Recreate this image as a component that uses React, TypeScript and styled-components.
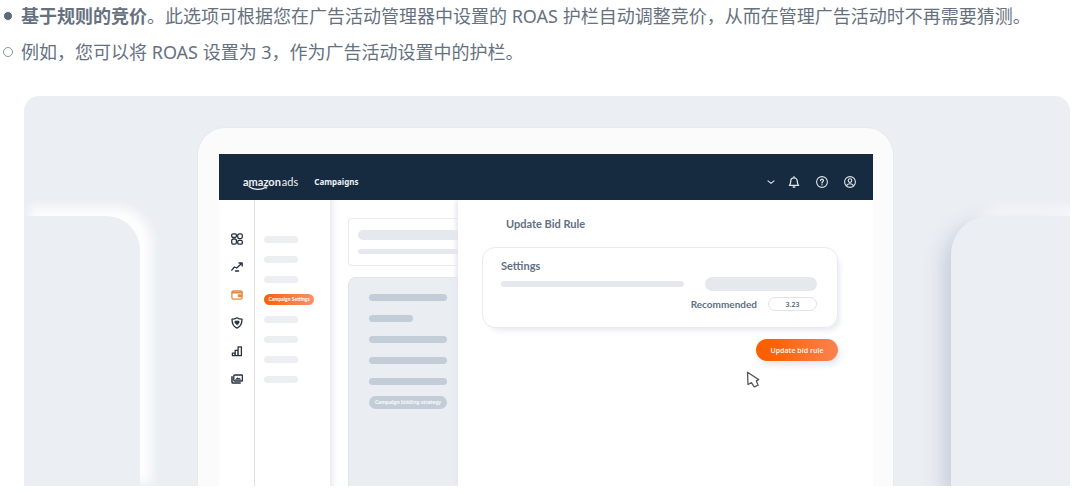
import React from "react";
import styled, { createGlobalStyle, css } from "styled-components";

const GlobalStyle = createGlobalStyle`
  * { box-sizing: border-box; }
  body {
    margin: 0;
    background: #fff;
    font-family: "Noto Sans", "Noto Sans CJK SC", sans-serif;
  }
  button, input { font-family: inherit; }
`;

const Page = styled.main`
  display: flex;
  flex-direction: column;
  min-height: 100vh;
  padding-bottom: 7px;
`;

const Notes = styled.ul`
  display: flex;
  flex-direction: column;
  gap: 4px;
  margin: 0 0 28px;
  padding: 0;
  list-style: none;
  color: #667180;
  font-size: 18px;
  line-height: 32px;
`;

const Note = styled.li<{ $hollow?: boolean }>`
  display: flex;
  align-items: center;
  gap: 8px;
  padding-left: 3px;

  &::before {
    content: "";
    flex: none;
    width: 8px;
    height: 8px;
    border: 1px solid ${(p) => (p.$hollow ? "#8a939f" : "#fff")};
    border-radius: 50%;
    background: ${(p) => (p.$hollow ? "transparent" : "#5d6877")};
  }
`;

const Stage = styled.section`
  flex: 1;
  display: grid;
  grid-template-columns: 116fr 697fr 119fr;
  column-gap: 57px;
  margin: 0 10px 0 24px;
  padding-top: 31px;
  border-radius: 15px 15px 0 0;
  background: #ebeef3;
  overflow: hidden;
`;

const SidePanel = styled.div<{ $side: "left" | "right" }>`
  margin-top: 89px;
  background: #ebeef3;
  ${(p) =>
    p.$side === "left"
      ? css`
          border-radius: 0 34px 0 0;
          box-shadow: 9px -6px 10px 3px #fdfdfe;
        `
      : css`
          border-radius: 38px 0 0 0;
          box-shadow: -6px 10px 20px 2px #c7cfdc, 16px -8px 10px #fafafc;
        `}
`;

const Device = styled.div`
  display: flex;
  padding: 26px 20px 0 21px;
  border: 1px solid #e8e9eb;
  border-bottom: 0;
  border-radius: 28px 28px 0 0;
  background: #fbfbfc;
`;

const Screen = styled.div`
  flex: 1;
  display: flex;
  flex-direction: column;
  min-width: 0;
  background: #fff;
`;

const TopBar = styled.header`
  display: flex;
  align-items: center;
  height: 46px;
  padding: 9px 17px 0 24px;
  background: #162b40;
  color: #fff;
`;

const Logo = styled.a`
  position: relative;
  display: flex;
  gap: 1px;
  color: #eef1f4;
  font-family: Lato, sans-serif;
  font-size: 11px;
  line-height: 12px;
  text-decoration: none;

  b { font-weight: 700; }
`;

const Smile = styled.svg`
  position: absolute;
  left: 5px;
  top: 9px;
`;

const TopLink = styled.a`
  margin-left: 16px;
  color: #eef1f4;
  font-size: 8px;
  font-weight: 700;
  line-height: 12px;
  text-decoration: none;
`;

const TopActions = styled.div<{ $gap: number }>`
  display: flex;
  align-items: center;
  gap: ${(p) => p.$gap}px;
  margin-left: auto;
`;

const IconButton = styled.button<{ $color?: string }>`
  display: flex;
  padding: 0;
  border: 0;
  background: none;
  color: ${(p) => p.$color ?? "#26323f"};
`;

const Workspace = styled.div`
  flex: 1;
  display: flex;
`;

const Rail = styled.nav`
  display: flex;
  flex-direction: column;
  align-items: center;
  gap: 16px;
  width: 36px;
  padding-top: 33px;
  border-right: 1px solid #dfe1e5;
`;

const SubNav = styled.nav`
  display: flex;
  flex-direction: column;
  align-items: flex-start;
  gap: 11px;
  width: 75px;
  padding: 36px 0 0 9px;
`;

const BarGroup = styled.div`
  display: flex;
  flex-direction: column;
  gap: 13px;
`;

const Bar = styled.div<{ $w?: number; $h?: number; $tone?: string }>`
  flex: none;
  width: ${(p) => (p.$w ? `${p.$w}px` : "100%")};
  height: ${(p) => p.$h ?? 7}px;
  border-radius: 7px;
  background: ${(p) => p.$tone ?? "#eceef2"};
`;

const ActiveLink = styled.a`
  width: 50px;
  height: 11px;
  border-radius: 6px;
  background: linear-gradient(90deg, #f96207, #fa9168);
  color: #fff;
  font-family: Lato, sans-serif;
  font-size: 5px;
  font-weight: 700;
  line-height: 11px;
  text-align: center;
  text-decoration: none;
  white-space: nowrap;
`;

const Content = styled.div`
  display: flex;
  flex-direction: column;
  gap: 11px;
  width: 128px;
  padding: 18px 0 0 18px;
  background: linear-gradient(90deg, #e9ecf1, #f7f8fa 4px, #fff 9px);
`;

const SummaryCard = styled.div`
  display: flex;
  flex-direction: column;
  gap: 9px;
  height: 48px;
  padding: 11px 0 0 9px;
  border: 1px solid #e8eaee;
  border-right: 0;
  border-radius: 4px 0 0 4px;

  ${Bar} { border-radius: 5px 0 0 5px; }
`;

const StrategyPanel = styled.div`
  flex: 1;
  display: flex;
  flex-direction: column;
  gap: 14px;
  padding: 16px 11px 0 20px;
  border: solid #e1e5ea;
  border-width: 1px 0 0 1px;
  border-radius: 8px 0 0 0;
  background: #eaeef3;
`;

const StrategyButton = styled.button`
  height: 13px;
  margin-top: -3px;
  padding: 0;
  border: 0;
  border-radius: 7px;
  background: #c3cdd8;
  color: #fff;
  font-size: 5px;
  font-weight: 600;
  line-height: 13px;
  white-space: nowrap;
`;

const Drawer = styled.section`
  position: relative;
  flex: 1;
  display: flex;
  flex-direction: column;
  padding: 15px 35px 0 24px;
  background: #fff;
  box-shadow: -2px 0 5px #e3e6ec;
  clip-path: inset(0 0 0 -10px);
`;

const DrawerTitle = styled.h2`
  margin: 0 0 14px 24px;
  color: #5f7083;
  font-family: Lato, sans-serif;
  font-size: 11px;
  font-weight: 700;
  line-height: 18px;
`;

const SettingsCard = styled.div`
  padding: 10px 20px 16px 18px;
  border: 1px solid #e8eaee;
  border-radius: 13px;
  box-shadow: 4px 5px 6px -3px #e2e6ef;
`;

const SettingsTitle = styled.h3`
  margin: 0 0 3px;
  color: #5f7083;
  font-family: Lato, sans-serif;
  font-size: 11px;
  font-weight: 700;
  line-height: 16px;
`;

const SettingsRow = styled.div`
  display: flex;
  align-items: center;
  justify-content: space-between;
  margin-bottom: 6px;
`;

const Field = styled.div`
  display: flex;
  align-items: center;
  justify-content: flex-end;
  gap: 11px;
  height: 14px;

  label {
    color: #5f7083;
    font-family: Lato, sans-serif;
    font-size: 10px;
    font-weight: 700;
    line-height: 14px;
  }

  input {
    width: 49px;
    height: 14px;
    padding: 0;
    border: 1px solid #e0e3e8;
    border-radius: 7px;
    background: #fff;
    color: #5b6b7e;
    font-size: 7px;
    font-weight: 600;
    text-align: center;
  }
`;

const PrimaryButton = styled.button`
  align-self: flex-end;
  width: 82px;
  height: 22px;
  margin-top: 11px;
  padding: 0;
  border: 0;
  border-radius: 11px;
  background: linear-gradient(90deg, #fb6000 15%, #fc8250);
  box-shadow: 2px 4px 6px #e2e7f1;
  color: #fff0e4;
  font-size: 7px;
  font-weight: 600;
`;

const Pointer = styled.svg`
  position: absolute;
  right: 112px;
  top: 171px;
`;

const Icon = ({ children, size = 12 }: { children: React.ReactNode; size?: number }) => (
  <svg
    width={size}
    height={size}
    viewBox="0 0 12 12"
    fill="none"
    stroke="currentColor"
    strokeWidth="1.3"
    strokeLinecap="round"
    strokeLinejoin="round"
    aria-hidden="true"
  >
    {children}
  </svg>
);

const railItems = [
  {
    label: "Dashboard",
    art: (
      <>
        <rect x="0.7" y="0.8" width="4.7" height="3.6" rx="1.3" />
        <rect x="6.7" y="0.8" width="4.6" height="4.8" rx="1.6" />
        <rect x="0.7" y="6" width="4.7" height="5.2" rx="1.6" />
        <rect x="6.7" y="7.4" width="4.6" height="3.8" rx="1.3" />
      </>
    ),
  },
  {
    label: "Performance",
    art: (
      <>
        <path d="M0.8 9.2 3.4 6l2.3 1L10.6 2.6M8 2h3.2v3" />
        <path d="M4.4 10h3.2" />
      </>
    ),
  },
  {
    label: "Campaigns",
    color: "#e58a45",
    art: (
      <>
        <rect x="0.9" y="2" width="10.2" height="8.2" rx="1.4" />
        <path d="M1 3.6h10" strokeWidth="1.6" />
        <path d="M7.4 6h3.2v1.6H7.4z" fill="currentColor" />
      </>
    ),
  },
  {
    label: "Brand safety",
    art: (
      <>
        <path d="M6 0.8c1.4 1 3 1.4 5 1.4 0 4.4-1.4 7.4-5 9-3.6-1.6-5-4.6-5-9 2 0 3.6-.4 5-1.4z" />
        <path
          d="M6 8 3.9 5.7a1.2 1.2 0 0 1 2.1-1.3 1.2 1.2 0 0 1 2.1 1.3z"
          fill="currentColor"
          strokeWidth="0.5"
        />
      </>
    ),
  },
  {
    label: "Reports",
    art: <path d="M1.4 8.2h2.6v2.4H1.4zM4.2 5.4h2.7v5.2H4.2zM7.1 1.8h3.3v8.8H7.1z" />,
  },
  {
    label: "Creatives",
    art: (
      <>
        <rect x="2.8" y="2" width="8.6" height="6" rx="0.8" />
        <path d="M1 3.8v5.4q0 .8.8.8h7.4" strokeWidth="1.5" />
        <path d="M4.8 6.3 6.4 4.7l1 .9 1-.5 1 1.2z" fill="currentColor" strokeWidth="0.6" />
      </>
    ),
  },
];

const topItems = [
  {
    label: "Notifications",
    art: (
      <>
        <path d="M1.4 9.4h9.2C9.3 8 9.4 6.8 9.3 5.2a3.3 3.3 0 0 0-6.6 0C2.6 6.8 2.7 8 1.4 9.4zM6 0.7v1" />
        <path d="M5.2 11h1.6" />
      </>
    ),
  },
  {
    label: "Help",
    art: (
      <>
        <circle cx="6" cy="6" r="5.4" strokeWidth="1.1" />
        <path d="M4.6 4.6c0-1.9 2.9-1.8 2.8 0C7.4 5.7 6 5.7 6 7M6 8.7v.1" />
      </>
    ),
  },
  {
    label: "Account",
    art: (
      <>
        <circle cx="6" cy="6" r="5.4" strokeWidth="1.1" />
        <circle cx="6" cy="4.6" r="1.8" strokeWidth="1.1" />
        <path d="M2.6 9.8C3.2 7 8.8 7 9.4 9.8" strokeWidth="1.1" />
      </>
    ),
  },
];

export default function App() {
  return (
    <Page>
      <GlobalStyle />
      <Notes>
        <Note>
          <span>
            <b>基于规则的竞价</b>。此选项可根据您在广告活动管理器中设置的 ROAS 护栏自动调整竞价，从而在管理广告活动时不再需要猜测。
          </span>
        </Note>
        <Note $hollow>
          <span>例如，您可以将 ROAS 设置为 3，作为广告活动设置中的护栏。</span>
        </Note>
      </Notes>

      <Stage>
        <SidePanel $side="left" />
        <Device>
          <Screen>
            <TopBar>
              <Logo href="#">
                <b>amazon</b>
                <span>ads</span>
                <Smile width="22" height="6" viewBox="0 0 22 6" fill="none" stroke="#eef1f4" strokeLinecap="round">
                  <path d="M1 1.5C6 5.3 13 5.3 18 2.2" strokeWidth="1.2" />
                  <path d="M16 1.2c1.6-.5 3-.4 3 .1s-.3 1.6-1 2.5" strokeWidth="0.9" />
                </Smile>
              </Logo>
              <TopLink href="#">Campaigns</TopLink>
              <TopActions $gap={12}>
                <IconButton aria-label="Switch account" $color="#dfe4e9">
                  <Icon size={10}>
                    <path d="M2.4 4.6 6 7.6l3.6-3" strokeWidth="1.4" />
                  </Icon>
                </IconButton>
                <TopActions $gap={16}>
                  {topItems.map((item) => (
                    <IconButton key={item.label} aria-label={item.label} $color="#dfe4e9">
                      <Icon>{item.art}</Icon>
                    </IconButton>
                  ))}
                </TopActions>
              </TopActions>
            </TopBar>

            <Workspace>
              <Rail>
                {railItems.map((item) => (
                  <IconButton key={item.label} aria-label={item.label} $color={item.color}>
                    <Icon>{item.art}</Icon>
                  </IconButton>
                ))}
              </Rail>

              <SubNav>
                <BarGroup>
                  <Bar $w={34} />
                  <Bar $w={34} />
                  <Bar $w={34} />
                </BarGroup>
                <ActiveLink href="#">Campaign Settings</ActiveLink>
                <BarGroup>
                  <Bar $w={34} />
                  <Bar $w={34} />
                  <Bar $w={34} />
                  <Bar $w={34} />
                </BarGroup>
              </SubNav>

              <Content>
                <SummaryCard>
                  <Bar $h={10} $tone="#e5e8ee" />
                  <Bar $h={5} $tone="#e5e8ee" />
                </SummaryCard>
                <StrategyPanel>
                  <Bar $tone="#c3cdd8" />
                  <Bar $w={44} $tone="#c3cdd8" />
                  <Bar $tone="#c3cdd8" />
                  <Bar $tone="#c3cdd8" />
                  <Bar $tone="#c3cdd8" />
                  <StrategyButton>Campaign bidding strategy</StrategyButton>
                </StrategyPanel>
              </Content>

              <Drawer>
                <DrawerTitle>Update Bid Rule</DrawerTitle>
                <SettingsCard>
                  <SettingsTitle>Settings</SettingsTitle>
                  <SettingsRow>
                    <Bar $w={183} $h={6} $tone="#e5e8ee" />
                    <Bar $w={112} $h={14} $tone="#e5e8ec" />
                  </SettingsRow>
                  <Field>
                    <label htmlFor="recommended">Recommended</label>
                    <input id="recommended" defaultValue="3.23" />
                  </Field>
                </SettingsCard>
                <PrimaryButton>Update bid rule</PrimaryButton>
                <Pointer width="15" height="18" viewBox="0 0 15 18" aria-hidden="true">
                  <path
                    d="M1.5 1.3 2 13.5l3.4-1.9 2.9 4.2 3.9-1.6-1.9-4.3 2.4-1.3z"
                    fill="#fff"
                    stroke="#55585e"
                    strokeWidth="1.3"
                    strokeLinejoin="round"
                  />
                </Pointer>
              </Drawer>
            </Workspace>
          </Screen>
        </Device>
        <SidePanel $side="right" />
      </Stage>
    </Page>
  );
}
